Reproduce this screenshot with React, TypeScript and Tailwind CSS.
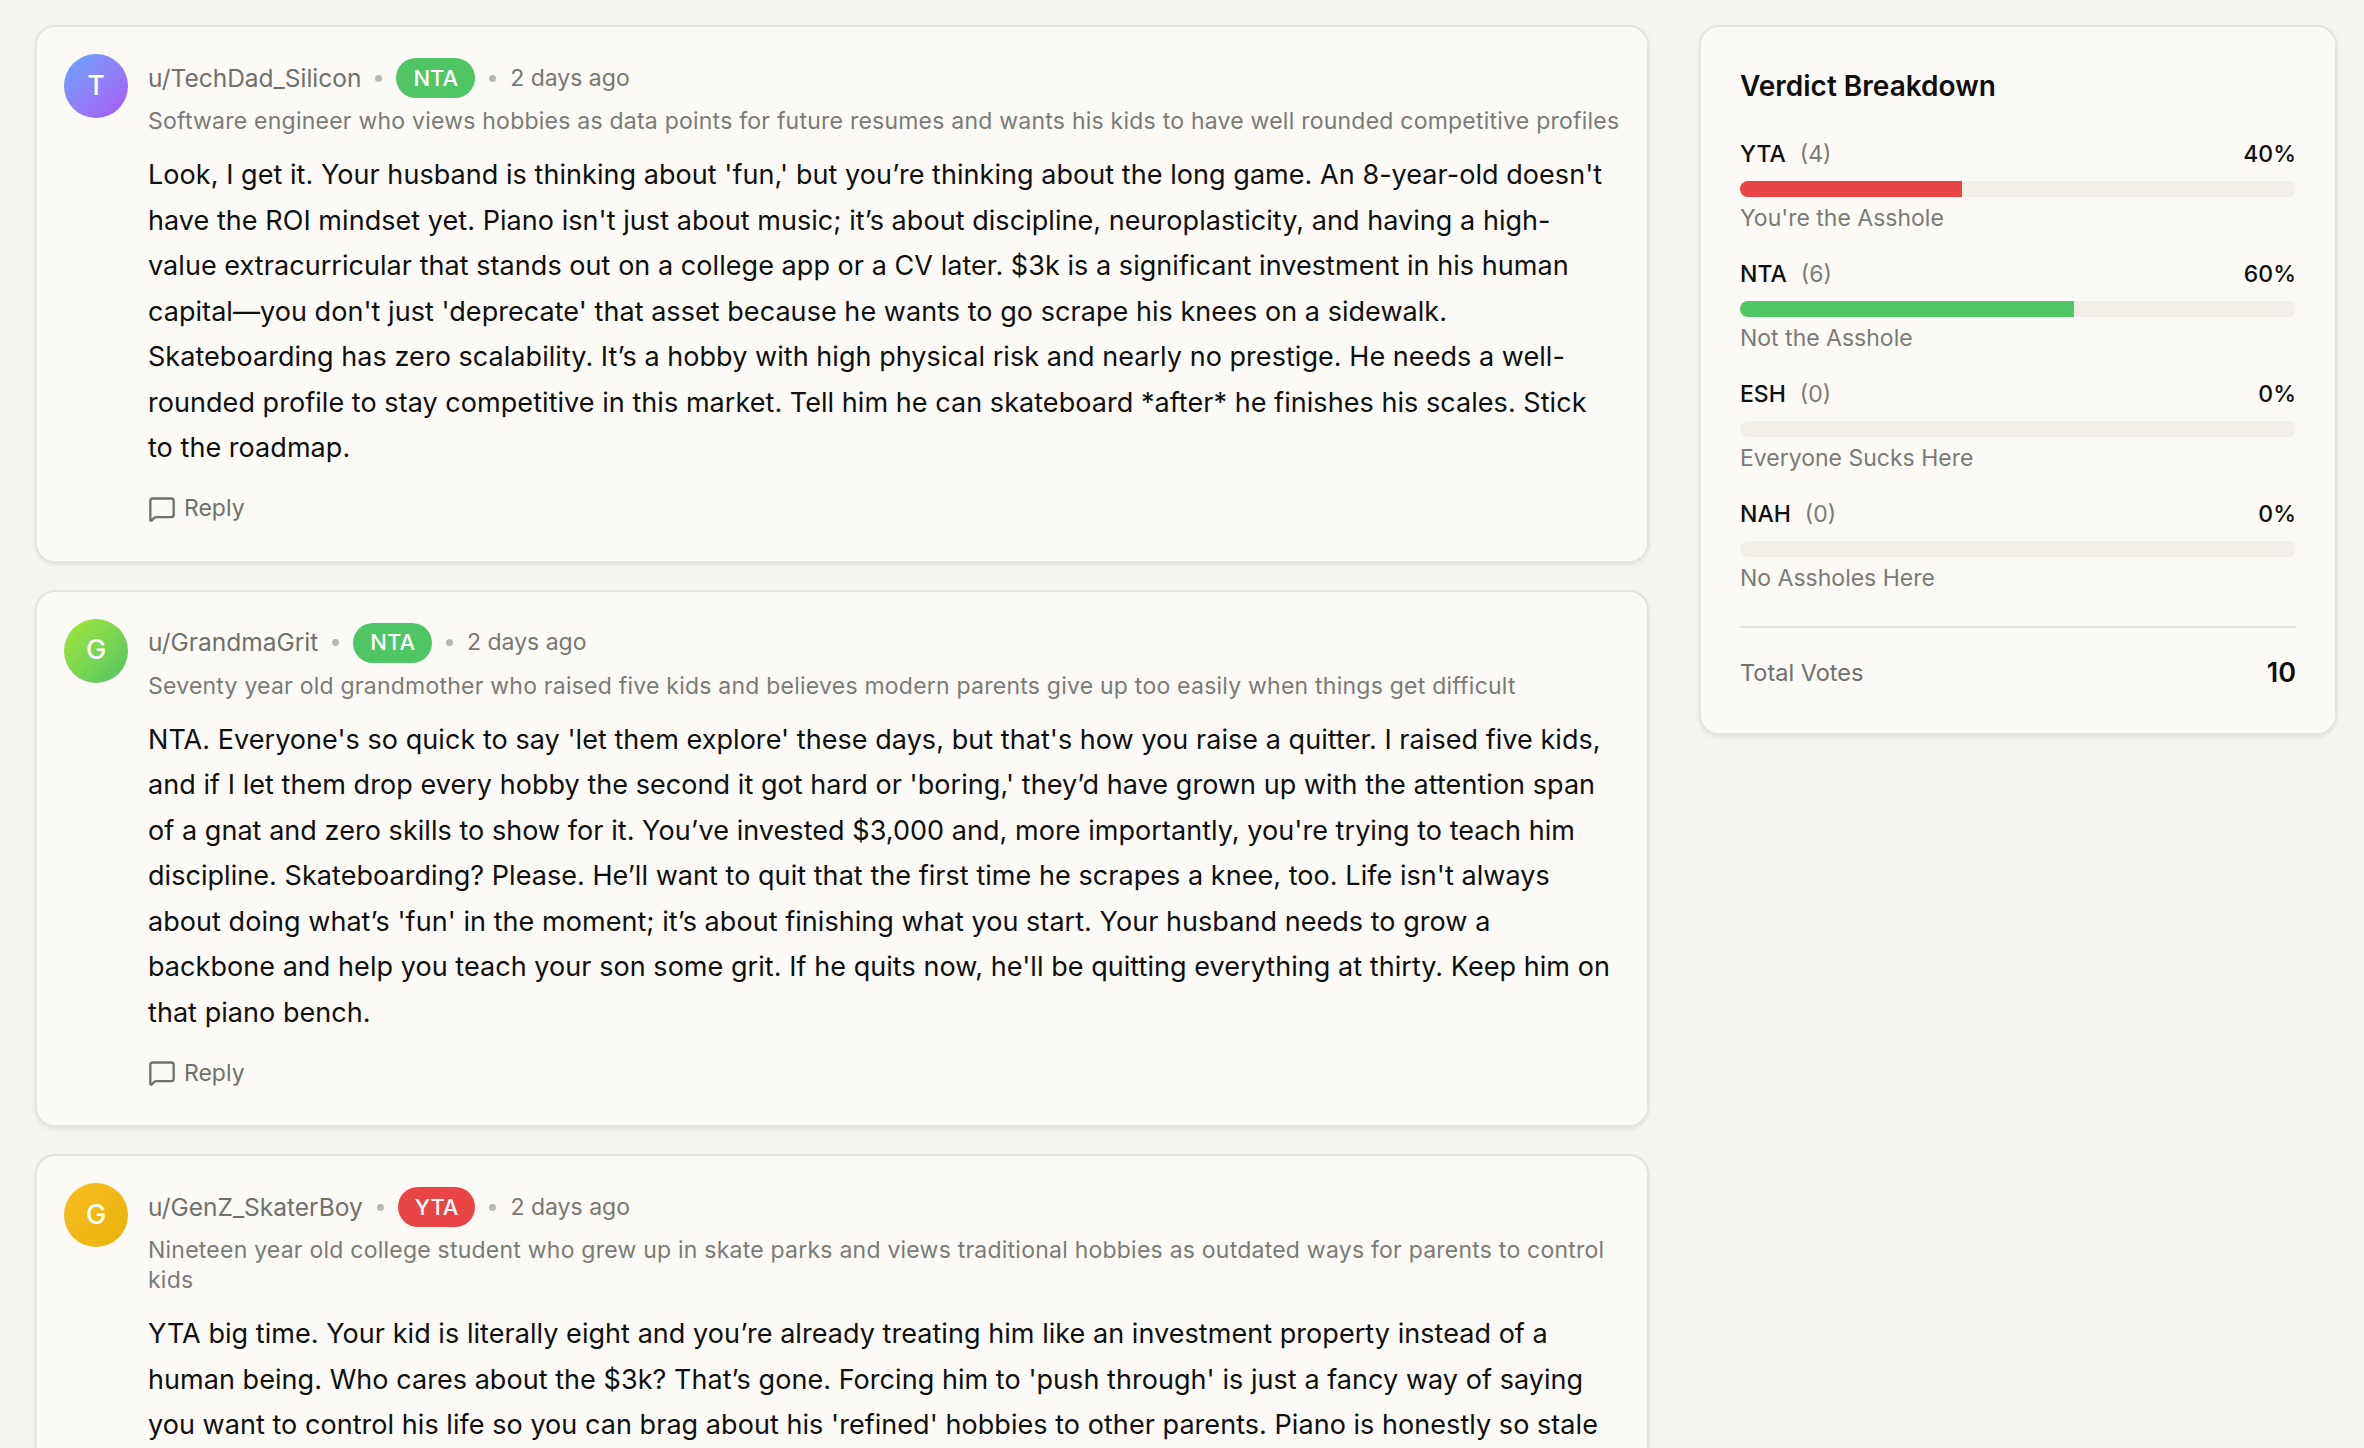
import { MessageSquare } from 'lucide-react'

const COMMENTS = [
  {
    user: 'u/TechDad_Silicon',
    initial: 'T',
    verdict: 'NTA',
    avatar: 'bg-gradient-to-br from-[#60a5fa] to-[#a855f7]',
    bio: 'Software engineer who views hobbies as data points for future resumes and wants his kids to have well rounded competitive profiles',
    body: `Look, I get it. Your husband is thinking about 'fun,' but you’re thinking about the long game. An 8-year-old doesn't
have the ROI mindset yet. Piano isn't just about music; it’s about discipline, neuroplasticity, and having a high-
value extracurricular that stands out on a college app or a CV later. $3k is a significant investment in his human
capital—you don't just 'deprecate' that asset because he wants to go scrape his knees on a sidewalk.
Skateboarding has zero scalability. It’s a hobby with high physical risk and nearly no prestige. He needs a well-
rounded profile to stay competitive in this market. Tell him he can skateboard *after* he finishes his scales. Stick
to the roadmap.`,
  },
  {
    user: 'u/GrandmaGrit',
    initial: 'G',
    verdict: 'NTA',
    avatar: 'bg-gradient-to-br from-[#a3e635] to-[#4ec662]',
    bio: 'Seventy year old grandmother who raised five kids and believes modern parents give up too easily when things get difficult',
    body: `NTA. Everyone's so quick to say 'let them explore' these days, but that's how you raise a quitter. I raised five kids,
and if I let them drop every hobby the second it got hard or 'boring,' they’d have grown up with the attention span
of a gnat and zero skills to show for it. You’ve invested $3,000 and, more importantly, you're trying to teach him
discipline. Skateboarding? Please. He’ll want to quit that the first time he scrapes a knee, too. Life isn't always
about doing what’s 'fun' in the moment; it’s about finishing what you start. Your husband needs to grow a
backbone and help you teach your son some grit. If he quits now, he'll be quitting everything at thirty. Keep him on
that piano bench.`,
  },
  {
    user: 'u/GenZ_SkaterBoy',
    initial: 'G',
    verdict: 'YTA',
    avatar: 'bg-gradient-to-br from-[#f5bf1f] to-[#eab308]',
    bio: `Nineteen year old college student who grew up in skate parks and views traditional hobbies as outdated ways for parents to control
kids`,
    body: `YTA big time. Your kid is literally eight and you’re already treating him like an investment property instead of a
human being. Who cares about the $3k? That’s gone. Forcing him to 'push through' is just a fancy way of saying
you want to control his life so you can brag about his 'refined' hobbies to other parents. Piano is honestly so stale`,
  },
]

const VERDICTS = [
  { code: 'YTA', count: 4, pct: 40, label: "You're the Asshole", color: 'bg-[#e94545]' },
  { code: 'NTA', count: 6, pct: 60, label: 'Not the Asshole', color: 'bg-[#4fc663]' },
  { code: 'ESH', count: 0, pct: 0, label: 'Everyone Sucks Here', color: 'bg-[#e9a23b]' },
  { code: 'NAH', count: 0, pct: 0, label: 'No Assholes Here', color: 'bg-[#60a5fa]' },
]

function Dot() {
  return <span className="w-[7px] h-[7px] rounded-full bg-[#b8b8b4]" />
}

function CommentCard({ c, last }: { c: (typeof COMMENTS)[number]; last: boolean }) {
  return (
    <div className="bg-[#fbfaf6] border-2 border-[#e6e4df] rounded-[20px] shadow-[0_2px_4px_rgba(0,0,0,0.08)] pt-[27px] px-[27px] pb-[34px] flex gap-5">
      <div className={`w-16 h-16 rounded-full flex-shrink-0 flex items-center justify-center text-white text-[27px] font-medium ${c.avatar}`}>
        {c.initial}
      </div>
      <div className="flex-1 min-w-0">
        <div className="flex items-center gap-[14px] mt-1 h-10 text-[23px] text-[#70706c]">
          <span className="text-[24.5px]">{c.user}</span>
          <Dot />
          <span className={`h-10 px-[17px] rounded-full flex items-center text-white text-[22px] font-medium ${c.verdict === 'NTA' ? 'bg-[#4fc663]' : 'bg-[#e94545]'}`}>
            {c.verdict}
          </span>
          <Dot />
          <span className="text-[#777773]">2 days ago</span>
        </div>
        <p className="mt-2 text-[23px] leading-[30px] tracking-[0.23px] text-[#7a7a76] whitespace-pre-line">{c.bio}</p>
        <p className="mt-4 text-[27px] leading-[45.5px] tracking-[0.05px] text-[#0f0f0f] whitespace-pre-line">{c.body}</p>
        {!last && (
          <div className="mt-5 h-9 flex items-center gap-2 text-[23px] text-[#70706c]">
            <MessageSquare size={28} strokeWidth={2} />
            <span>Reply</span>
          </div>
        )}
      </div>
    </div>
  )
}

function VerdictPanel() {
  return (
    <div className="bg-[#fbfaf6] border-2 border-[#e6e4df] rounded-[20px] shadow-[0_2px_4px_rgba(0,0,0,0.08)] px-[39px] pt-[39px] pb-[46px]">
      <h2 className="text-[28px] leading-10 font-semibold text-[#0f0f0f]">Verdict Breakdown</h2>
      <div className="mt-[31px] flex flex-col gap-[23px]">
        {VERDICTS.map((v) => (
          <div key={v.code}>
            <div className="flex items-center justify-between h-8 pt-[2px] text-[23px]">
              <span className="flex items-center gap-[14px]">
                <span className="font-medium text-[#0f0f0f]">{v.code}</span>
                <span className="text-[#7a7a76]">({v.count})</span>
              </span>
              <span className="font-medium text-[#0f0f0f]">{v.pct}%</span>
            </div>
            <div className="mt-3 h-4 rounded-full bg-[#f1efe8] overflow-hidden">
              <div className={`h-full ${v.color}`} style={{ width: `${v.pct}%` }} />
            </div>
            <div className="mt-[5px] h-[32px] flex items-center text-[23px] text-[#7a7a76]">{v.label}</div>
          </div>
        ))}
      </div>
      <div className="mt-[32px] pt-[31px] border-t-2 border-[#e6e4df] flex items-center justify-between h-[61px]">
        <span className="text-[23.5px] text-[#70706c]">Total Votes</span>
        <span className="text-[27px] font-semibold text-[#0f0f0f]">10</span>
      </div>
    </div>
  )
}

export default function App() {
  return (
    <div className="h-[1448px] overflow-hidden bg-[#f6f5f1] font-['Inter','Liberation_Sans',sans-serif]">
      <div className="flex gap-[50px] pl-[35px] pt-[25px]">
        <div className="w-[1614px] flex-shrink-0 flex flex-col gap-[27px]">
          {COMMENTS.map((c, i) => (
            <CommentCard key={c.user} c={c} last={i === 2} />
          ))}
        </div>
        <div className="w-[638px] flex-shrink-0 self-start">
          <VerdictPanel />
        </div>
      </div>
    </div>
  )
}
